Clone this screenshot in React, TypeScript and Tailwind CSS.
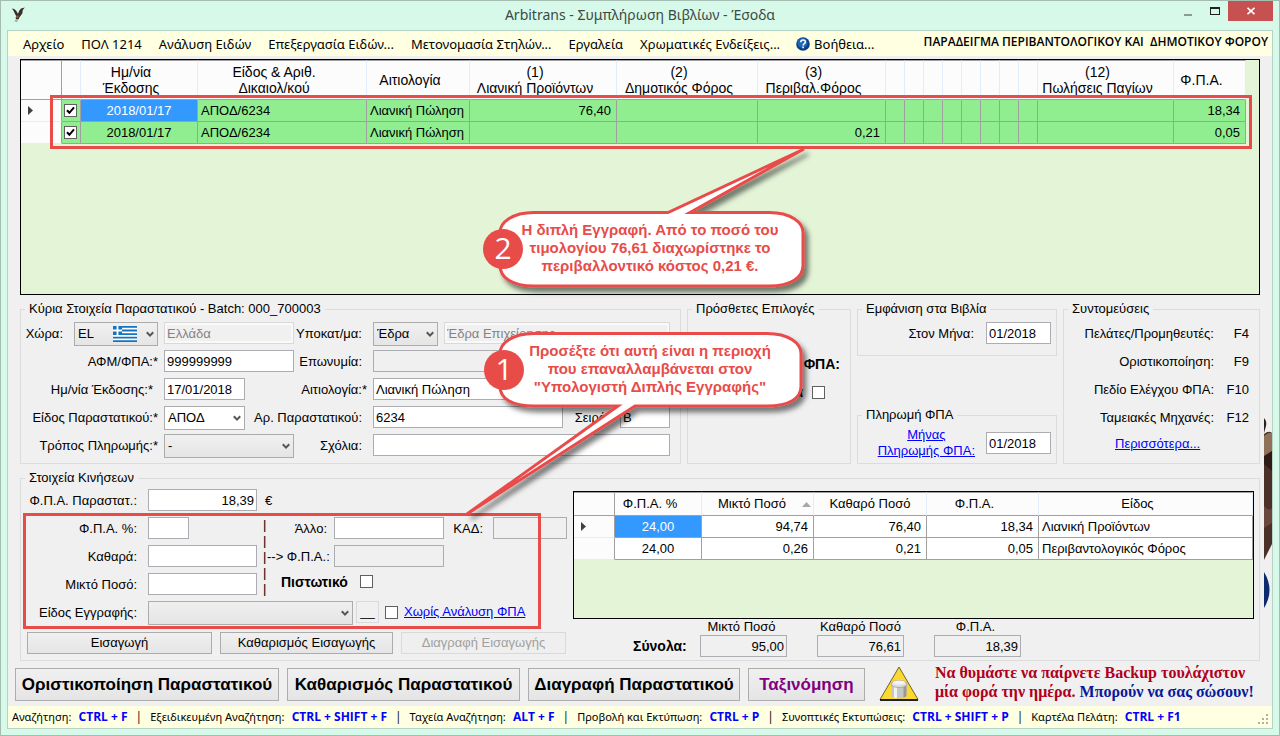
import { useState } from "react";
import type { ReactNode } from "react";
import clsx from "clsx";

const mainCols = [
  { label: "", w: "w-[41px]" },
  { label: "", w: "w-[19px]" },
  { label: "Ημ/νία\nΈκδοσης", w: "w-[117px]" },
  { label: "Είδος & Αριθ.\nΔικαιολ/κού", w: "w-[169px]" },
  { label: "Αιτιολογία", w: "w-[103px]" },
  { label: "(1)\nΛιανική Προϊόντων", w: "w-[147px]" },
  { label: "(2)\nΔημοτικός Φόρος", w: "w-[141px]" },
  { label: "(3)\nΠεριβαλ.Φόρος", w: "w-[128px]" },
  ...Array.from({ length: 8 }, () => ({ label: "", w: "w-[19px]" })),
  { label: "(12)\nΠωλήσεις Παγίων", w: "w-[136px]" },
  { label: "Φ.Π.Α.", w: "w-[72px]" },
];

const mainRows = [
  { date: "2018/01/17", doc: "ΑΠΟΔ/6234", reason: "Λιανική Πώληση", values: ["76,40", "", ""], vat: "18,34" },
  { date: "2018/01/17", doc: "ΑΠΟΔ/6234", reason: "Λιανική Πώληση", values: ["", "", "0,21"], vat: "0,05" },
];

const lines = [
  { pct: "24,00", gross: "94,74", net: "76,40", vat: "18,34", kind: "Λιανική Προϊόντων" },
  { pct: "24,00", gross: "0,26", net: "0,21", vat: "0,05", kind: "Περιβαντολογικός Φόρος" },
];

const shortcuts = [
  ["Πελάτες/Προμηθευτές:", "F4"],
  ["Οριστικοποίηση:", "F9"],
  ["Πεδίο Ελέγχου ΦΠΑ:", "F10"],
  ["Ταμειακές Μηχανές:", "F12"],
];

const statusItems = [
  ["Αναζήτηση:", "CTRL + F"],
  ["Εξειδικευμένη Αναζήτηση:", "CTRL + SHIFT + F"],
  ["Ταχεία Αναζήτηση:", "ALT + F"],
  ["Προβολή και Εκτύπωση:", "CTRL + P"],
  ["Συνοπτικές Εκτυπώσεις:", "CTRL + SHIFT + P"],
  ["Καρτέλα Πελάτη:", "CTRL + F1"],
];

function Group({ title, className, children }: { title: string; className?: string; children: ReactNode }) {
  return (
    <fieldset className={clsx("min-w-0 border border-[#dcdcdc]", className)}>
      <legend className="ml-1 px-1 leading-4 whitespace-nowrap">{title}</legend>
      {children}
    </fieldset>
  );
}

function Field({ id, value = "", className, disabled, faded, label }: {
  id: string; value?: string; className?: string; disabled?: boolean; faded?: boolean; label?: string;
}) {
  return (
    <input id={id} type="text" defaultValue={value} disabled={disabled} aria-label={label}
      className={clsx("h-[22px] min-w-0 border px-[2px] leading-4",
        faded ? "border-[#d9d9d9] bg-[#f0f0f0] text-[#838383] outline-2 -outline-offset-3 outline-white/60"
          : disabled ? "border-[#abadb3] bg-[#f0f0f0] text-black" : "border-[#abadb3] bg-white text-black",
        className)} />
  );
}

function Combo({ id, value, className, white, children }: {
  id: string; value: string; className?: string; white?: boolean; children?: ReactNode;
}) {
  return (
    <div className={clsx("relative h-6", className)}>
      <select id={id} defaultValue={value}
        className={clsx("h-6 w-full appearance-none border border-[#acacac] px-[3px]",
          white ? "bg-white" : "bg-linear-to-b from-[#f0f0f0] to-[#e5e5e5]")}>
        <option>{value}</option>
      </select>
      {children}
      <svg className="pointer-events-none absolute top-[9px] right-1 h-[7px] w-[8px]" viewBox="0 0 8 7" fill="none" aria-hidden="true">
        <path d="M.8 1.2 4 4.6 7.2 1.2" stroke="#555" strokeWidth="2" />
      </svg>
    </div>
  );
}

function CheckBox({ id, label, on }: { id: string; label?: string; on?: boolean }) {
  const [checked, setChecked] = useState(!!on);
  return (
    <span className="relative block size-[13px]">
      <input id={id} type="checkbox" aria-label={label} checked={checked} onChange={() => setChecked(!checked)}
        className="block size-[13px] appearance-none border border-[#606060] bg-white" />
      {checked && (
        <svg className="pointer-events-none absolute inset-0 size-[13px]" viewBox="0 0 13 13" fill="none" aria-hidden="true">
          <path d="M3 6.2 5.4 8.8 10 3.4" stroke="#000" strokeWidth="2" />
        </svg>
      )}
    </span>
  );
}

function Label({ htmlFor, className, children }: { htmlFor: string; className?: string; children: ReactNode }) {
  return (
    <label htmlFor={htmlFor} className={clsx("shrink-0 text-right leading-6 whitespace-nowrap", className)}>{children}</label>
  );
}

function RowArrow() {
  return (
    <svg className="ml-[7px] h-[9px] w-[6px]" viewBox="0 0 6 9" aria-hidden="true">
      <path d="M0 0 5 4.500 0 9Z" fill="#404040" />
    </svg>
  );
}

function TitleBar() {
  return (
    <header className="relative flex h-[29px] shrink-0 items-start justify-center">
      <svg className="absolute top-[6px] left-[11px] h-[16px] w-[13px]" viewBox="0 0 13 16" aria-hidden="true">
        <path d="M0 1.5 2.2 2l2 1.8 1.8 3 1.2-3L9 1.5 12.8.5 10.8 3l-.5 3.5-3 4-.7 1.8-2 .2-1.2-1.8 1.2-.9L3 7 1.8 4.2Z" fill="#3b2f2b" />
        <path d="m3.8 12 2.2.3-.8 3-2.8-.9Z" fill="#9ab3bd" />
        <path d="m5 8 2 1-1 2-2-.6Z" fill="#8a5a32" />
      </svg>
      <h1 className="font-[Noto_Sans,sans-serif] text-[14px] leading-7 text-[#3c4a44]">Arbitrans - Συμπλήρωση Βιβλίων - Έσοδα</h1>
      <div className="absolute top-0 right-[6px] flex h-5 items-stretch">
        <button aria-label="Ελαχιστοποίηση" className="flex w-[27px] items-end justify-center pb-[5px]">
          <span className="block h-[2px] w-2 bg-[#8b9c94]" />
        </button>
        <button aria-label="Μεγιστοποίηση" className="flex w-[27px] items-center justify-center">
          <span className="block h-2 w-[10px] border border-t-2 border-[#222]" />
        </button>
        <button aria-label="Κλείσιμο" className="flex w-[45px] items-center justify-center bg-[#c75050]">
          <svg className="size-2" viewBox="0 0 8 8" aria-hidden="true">
            <path d="m.5.8 7 6.4m0-6.4-7 6.4" stroke="#fff" strokeWidth="1.7" />
          </svg>
        </button>
      </div>
    </header>
  );
}

function MenuBar() {
  return (
    <nav className="flex h-[25px] shrink-0 items-center gap-[17px] bg-[#ffffe1] pr-1 pl-[15px] font-[Noto_Sans,sans-serif] text-[13px] whitespace-nowrap">
      <button>Αρχείο</button>
      <button>ΠΟΛ 1214</button>
      <button>Ανάλυση Ειδών</button>
      <button>Επεξεργασία Ειδών...</button>
      <button>Μετονομασία Στηλών...</button>
      <button>Εργαλεία</button>
      <button>Χρωματικές Ενδείξεις...</button>
      <button className="-ml-px flex items-center gap-1">
        <svg className="size-[14px]" viewBox="0 0 14 14" aria-hidden="true">
          <circle cx="7" cy="7" r="6.8" fill="#0a3f86" />
          <circle cx="6.5" cy="6" r="5" fill="#1d66b8" />
          <path d="M4.800 5.200c0-3 4.600-2.900 4.600-.2 0 1.700-2.300 1.700-2.300 3.500M7.100 9.600v1.700" fill="none" stroke="#fff" strokeWidth="1.600" />
        </svg>
        Βοήθεια...
      </button>
      <strong className="ml-auto pb-1 font-[Open_Sans,sans-serif] text-[12px] font-semibold whitespace-pre">ΠΑΡΑΔΕΙΓΜΑ ΠΕΡΙΒΑΝΤΟΛΟΓΙΚΟΥ ΚΑΙ  ΔΗΜΟΤΙΚΟΥ ΦΟΡΟΥ</strong>
    </nav>
  );
}

function MainGrid() {
  const cell = "h-[22px] border-r border-b border-[#a0a0a0] p-0 px-[3px] leading-4";
  return (
    <div className="h-[236px] border border-black bg-[#e4f4d7]">
      <table className="w-[1225px] table-fixed border-separate border-spacing-0 whitespace-nowrap">
        <thead className="text-[14px]">
          <tr>
            {mainCols.map((c, i) => (
              <th key={i} className={clsx(c.w, "h-10 border-t border-r border-b border-t-[#a0a0a0] border-b-[#a0a0a0] bg-[#fcfcfc] p-0 text-center leading-4 font-normal whitespace-pre",
                i === 0 ? "border-r-[#a0a0a0]" : "border-r-[#e2edfb]", c.label && "pr-4")}>{c.label}</th>
            ))}
          </tr>
        </thead>
        <tbody>
          {mainRows.map((r, i) => (
            <tr key={i} className="bg-[#90ee90]">
              <td className="h-[22px] border-r border-b border-r-[#a0a0a0] border-b-[#e2edfb] bg-[#fcfcfc] p-0">{i === 0 && <RowArrow />}</td>
              <td className="h-[22px] border-r border-b border-[#a0a0a0] p-0 pl-[2px]"><CheckBox id={`row${i}`} label="Επιλογή γραμμής" on /></td>
              <td className={clsx(cell, "text-center", i === 0 && "bg-[#3399ff] text-white")}>{r.date}</td>
              <td className={cell}>{r.doc}</td>
              <td className={cell}>{r.reason}</td>
              {r.values.map((v, j) => <td key={j} className={clsx(cell, "pr-[5px] text-right")}>{v}</td>)}
              {Array.from({ length: 9 }, (_, j) => <td key={j} className={cell} />)}
              <td className={clsx(cell, "pr-[5px] text-right")}>{r.vat}</td>
            </tr>
          ))}
        </tbody>
      </table>
    </div>
  );
}

function DocumentGroup() {
  return (
    <Group title="Κύρια Στοιχεία Παραστατικού - Batch: 000_700003" className="flex-1">
      <div className="flex flex-col gap-1 pt-[5px] pr-[10px] pb-[5px] *:flex *:h-6 *:items-start">
        <div>
          <Label htmlFor="country" className="w-[53px] pr-[11px]">Χώρα:</Label>
          <Combo id="country" value="EL" className="mr-[6px] w-[84px]">
            <svg className="pointer-events-none absolute top-1 left-[39px] h-4 w-6" viewBox="0 0 24 16" aria-label="Ελλάδα">
              <path fill="#fff" d="M0 0h24v16H0z" />
              <path fill="#1673bd" d="M0 0h24v1.800H0zM0 3.600h24v1.800H0zM0 7.200h24V9H0zM0 10.700h24v1.800H0zM0 14.200h24V16H0zM0 0h9v9H0z" />
              <path stroke="#fff" strokeWidth="1.800" d="M4.500 0v9M0 4.500h9" />
            </svg>
          </Combo>
          <Field id="countryName" value="Ελλάδα" label="Όνομα χώρας" disabled faded className="w-[130px]" />
          <Label htmlFor="branch" className="w-[73px] pr-[5px]">Υποκατ/μα:</Label>
          <Combo id="branch" value="Έδρα" className="mx-[6px] w-[65px]" />
          <Field id="branchName" value="Έδρα Επιχείρησης" label="Όνομα υποκαταστήματος" disabled faded className="flex-1" />
        </div>
        <div>
          <Label htmlFor="afm" className="mr-[6px] w-[137px]">ΑΦΜ/ΦΠΑ:*</Label>
          <Field id="afm" value="999999999" className="w-[130px]" />
          <Label htmlFor="name" className="mr-[6px] w-[73px] pr-[5px]">Επωνυμία:</Label>
          <Field id="name" disabled className="flex-1" />
        </div>
        <div>
          <Label htmlFor="issued" className="mr-[6px] w-[137px] pr-[5px]">Ημ/νία Έκδοσης:*</Label>
          <Field id="issued" value="17/01/2018" className="w-[81px]" />
          <Label htmlFor="reason" className="mr-[6px] w-[122px]">Αιτιολογία:*</Label>
          <Field id="reason" value="Λιανική Πώληση" className="flex-1" />
        </div>
        <div>
          <Label htmlFor="docType" className="mr-[6px] w-[137px]">Είδος Παραστατικού:*</Label>
          <Combo id="docType" value="ΑΠΟΔ" white className="w-[81px]" />
          <Label htmlFor="docNo" className="mr-[6px] w-[122px] pr-[5px]">Αρ. Παραστατικού:</Label>
          <Field id="docNo" value="6234" className="flex-1" />
          <Label htmlFor="series" className="w-[57px] pr-[10px]">Σειρά:</Label>
          <Field id="series" value="Β" className="w-[50px]" />
        </div>
        <div>
          <Label htmlFor="payment" className="mr-[6px] w-[137px]">Τρόπος Πληρωμής:*</Label>
          <Combo id="payment" value="-" className="w-[130px]" />
          <Label htmlFor="notes" className="mr-[6px] w-[73px] pr-[5px]">Σχόλια:</Label>
          <Field id="notes" className="flex-1" />
        </div>
      </div>
    </Group>
  );
}

function EntryForm() {
  const button = "h-[22px] border border-[#acacac] bg-linear-to-b from-[#f0f0f0] to-[#e5e5e5] disabled:border-[#d9d9d9] disabled:from-[#efefef] disabled:to-[#efefef] disabled:text-[#a0a0a0]";
  return (
    <div className="w-[547px] shrink-0">
      <div className="flex h-7 items-start">
        <Label htmlFor="vatDoc" className="mr-[11px] w-[116px]">Φ.Π.Α. Παραστατ.:</Label>
        <Field id="vatDoc" value="18,39" className="w-[109px] text-right" />
        <span className="pl-2 leading-6">€</span>
      </div>
      <div className="flex h-[84px]">
        <div className="flex flex-col *:flex *:h-7 *:items-start">
          <div>
            <Label htmlFor="vatPct" className="mr-[11px] w-[116px]">Φ.Π.Α. %:</Label>
            <Field id="vatPct" className="w-[41px]" />
          </div>
          <div>
            <Label htmlFor="net" className="mr-[11px] w-[116px]">Καθαρά:</Label>
            <Field id="net" className="w-[109px]" />
          </div>
          <div>
            <Label htmlFor="gross" className="mr-[11px] w-[116px]">Μικτό Ποσό:</Label>
            <Field id="gross" className="w-[109px]" />
          </div>
        </div>
        <div className="w-[10px] pl-[6px] leading-4">
          {[0, 1, 2, 3, 4].map((n) => <div key={n}>|</div>)}
        </div>
        <div className="flex flex-1 flex-col *:flex *:h-7 *:items-start">
          <div>
            <Label htmlFor="other" className="mr-[7px] w-[60px]">Άλλο:</Label>
            <Field id="other" className="w-[110px]" />
            <Label htmlFor="kad" className="w-[49px] pr-[10px]">ΚΑΔ:</Label>
            <Field id="kad" disabled className="w-[74px]" />
          </div>
          <div>
            <Label htmlFor="vatAmount" className="mr-[7px] w-[60px]">--&gt; Φ.Π.Α.:</Label>
            <Field id="vatAmount" disabled className="w-[110px]" />
          </div>
          <div className="gap-[9px] pt-[2px] pl-[14px]">
            <label htmlFor="credit" className="w-[70px] text-[14px] leading-[14px] font-bold">Πιστωτικό</label>
            <CheckBox id="credit" />
          </div>
        </div>
      </div>
      <div className="flex h-[31px] items-start">
        <Label htmlFor="entryKind" className="mr-[11px] w-[116px]">Είδος Εγγραφής:</Label>
        <Combo id="entryKind" value="" className="w-[205px]" />
        <button className="mx-[3px] h-[22px] w-[23px] border border-[#d9d9d9] leading-4">__</button>
        <div className="flex h-[22px] items-center gap-[6px] pl-[3px]">
          <CheckBox id="noVat" label="Χωρίς Ανάλυση ΦΠΑ" />
          <a href="#no-vat" className="whitespace-nowrap text-[#0000ff] underline">Χωρίς Ανάλυση ΦΠΑ</a>
        </div>
      </div>
      <div className="flex gap-2 pl-[6px]">
        <button className={clsx(button, "w-[185px]")}>Εισαγωγή</button>
        <button className={clsx(button, "w-[173px]")}>Καθαρισμός Εισαγωγής</button>
        <button disabled className={clsx(button, "w-[165px]")}>Διαγραφή Εισαγωγής</button>
      </div>
    </div>
  );
}

function LinesPanel() {
  const head = "h-6 border-t border-r border-b border-t-[#a0a0a0] border-b-[#a0a0a0] bg-[#fcfcfc] p-0 font-normal leading-4";
  const cell = "h-[22px] border-r border-b border-[#a0a0a0] bg-white p-0 px-[3px] leading-4";
  return (
    <div className="ml-[5px] min-w-0 flex-1 pt-[2px]">
      <div className="h-[128px] border border-black bg-[#e4f4d7]">
        <table className="w-full table-fixed border-separate border-spacing-0 whitespace-nowrap">
          <thead>
            <tr>
              <th className={clsx(head, "w-[41px] border-r-[#a0a0a0]")} />
              <th className={clsx(head, "w-[87px] border-r-[#e2edfb] pr-4 text-center")}>Φ.Π.Α. %</th>
              <th className={clsx(head, "w-[112px] border-r-[#e2edfb] pr-[2px] text-right")}>
                <span className="inline-flex items-center gap-4">
                  Μικτό Ποσό
                  <svg className="h-[5px] w-[9px]" viewBox="0 0 9 5" aria-hidden="true"><path d="M4.500 0 9 5H0Z" fill="#a8a8a8" /></svg>
                </span>
              </th>
              <th className={clsx(head, "w-[113px] border-r-[#e2edfb] text-center")}>Καθαρό Ποσό</th>
              <th className={clsx(head, "w-[112px] border-r-[#e2edfb] pr-4 text-center")}>Φ.Π.Α.</th>
              <th className={clsx(head, "border-r-[#e2edfb] pr-4 text-center")}>Είδος</th>
            </tr>
          </thead>
          <tbody>
            {lines.map((l, i) => (
              <tr key={i}>
                <td className="h-[22px] border-r border-b border-r-[#a0a0a0] border-b-[#e2edfb] bg-[#fcfcfc] p-0">{i === 0 && <RowArrow />}</td>
                <td className={clsx("h-[22px] border-r border-b border-[#a0a0a0] p-0 text-center leading-4", i === 0 ? "bg-[#3399ff] text-white" : "bg-white")}>{l.pct}</td>
                <td className={clsx(cell, "pr-[5px] text-right")}>{l.gross}</td>
                <td className={clsx(cell, "pr-[5px] text-right")}>{l.net}</td>
                <td className={clsx(cell, "pr-[5px] text-right")}>{l.vat}</td>
                <td className={cell}>{l.kind}</td>
              </tr>
            ))}
          </tbody>
        </table>
      </div>
      <div className="flex items-end gap-[30px] pl-[60px] *:flex *:flex-col">
        <strong className="-mr-5 h-[21px] w-[57px] text-[14px] leading-5">Σύνολα:</strong>
        <div><label htmlFor="sumGross" className="pr-1 text-center leading-4">Μικτό Ποσό</label><Field id="sumGross" value="95,00" disabled className="w-[87px] text-right" /></div>
        <div><label htmlFor="sumNet" className="text-center leading-4">Καθαρό Ποσό</label><Field id="sumNet" value="76,61" disabled className="w-[87px] text-right" /></div>
        <div><label htmlFor="sumVat" className="pr-1 text-center leading-4">Φ.Π.Α.</label><Field id="sumVat" value="18,39" disabled className="w-[87px] text-right" /></div>
      </div>
    </div>
  );
}

function ActionBar() {
  const big = "h-[33px] shrink-0 border border-[#adadad] bg-linear-to-b from-[#f0f0f0] to-[#e5e5e5] text-[17px] font-bold whitespace-nowrap";
  return (
    <div className="mt-[7px] mb-[5px] flex h-[33px] items-center gap-2 pl-[7px]">
      <button className={clsx(big, "w-[264px]")}>Οριστικοποίηση Παραστατικού</button>
      <button className={clsx(big, "w-[233px]")}>Καθαρισμός Παραστατικού</button>
      <button className={clsx(big, "w-[212px]")}>Διαγραφή Παραστατικού</button>
      <button className={clsx(big, "w-[117px] text-[#800080]")}>Ταξινόμηση</button>
      <svg className="ml-[6px] h-[37px] w-[40px] shrink-0" viewBox="0 0 40 37" aria-hidden="true">
        <path d="M20 1 39 33.500H1Z" fill="#fcd930" stroke="#6e6233" />
        <path d="M1 34h38" stroke="#222" strokeWidth="2" />
        <path d="M12.500 17v12.500c0 4 15 4 15 0V17Z" fill="#c6c6c6" />
        <path d="M15 19v13h3V19Z" fill="#f1f1f1" />
        <path d="M24.500 19v13l3-2V18Z" fill="#999" />
        <ellipse cx="20" cy="18" rx="8" ry="3.500" fill="#dedede" stroke="#999" strokeWidth=".7" />
        <ellipse cx="20" cy="16.500" rx="6" ry="2" fill="#f4f4f4" />
      </svg>
      <p className="ml-2 pb-[6px] font-['Liberation_Serif',serif] text-[16px] leading-[19px] font-bold whitespace-nowrap text-[#b00020]">
        Να θυμάστε να παίρνετε Backup τουλάχιστον<br />μία φορά την ημέρα. <span className="text-[#0a1a9c]">Μπορούν να σας σώσουν!</span>
      </p>
    </div>
  );
}

function Annotations() {
  return (
    <div className="pointer-events-none absolute -top-px -left-px h-[736px] w-[1280px]">
      <svg className="absolute inset-0 size-full" viewBox="0 0 1280 736" aria-hidden="true">
        <defs>
          <filter id="shadow" x="-10%" y="-10%" width="130%" height="130%">
            <feDropShadow dx="4" dy="5" stdDeviation="2.500" floodColor="#000" floodOpacity=".5" />
          </filter>
        </defs>
        <g fill="none" stroke="#e84c49" strokeWidth="3">
          <path d="M51.500 96.500h1199v51H51.500z" />
          <path d="M24.500 514.500h515v113H24.500z" />
        </g>
        <g fill="#fff" stroke="#e84c49" strokeWidth="3" filter="url(#shadow)">
          <path d="M534 212.500H668L804 149 690 212.500h79c22 0 34 10 34 20v33c0 12-12 20.500-34 20.500H534c-22 0-34-8.500-34-20.500v-33c0-10 12-20 34-20Z" />
          <path d="M534 333.500h233c22 0 34 10 34 20v33c0 12-12 19.500-34 19.500H635L467 514 618 406h-84c-22 0-34-7.500-34-19.500v-33c0-10 12-20 34-20Z" />
        </g>
        <circle cx="503" cy="249" r="20" fill="#e84c49" />
        <circle cx="504" cy="370" r="20" fill="#e84c49" />
      </svg>
      <span className="absolute top-[228px] left-[483px] w-10 text-center font-[Open_Sans,sans-serif] text-[30px] leading-10 text-white">2</span>
      <span className="absolute top-[349px] left-[484px] w-10 text-center font-[Open_Sans,sans-serif] text-[30px] leading-10 text-white">1</span>
      <p className="absolute top-[221px] left-[510px] w-[280px] text-center text-[15px] leading-[18px] font-bold whitespace-nowrap text-[#e84c49]">
        Η διπλή Εγγραφή. Από το ποσό του<br />τιμολογίου 76,61 διαχωρίστηκε το<br />περιβαλλοντικό κόστος 0,21 €.
      </p>
      <p className="absolute top-[342px] left-[510px] w-[280px] text-center text-[15px] leading-[18px] font-bold whitespace-nowrap text-[#e84c49]">
        Προσέξτε ότι αυτή είναι η περιοχή<br />που επαναλλαμβάνεται στον<br />"Υπολογιστή Διπλής Εγγραφής"
      </p>
    </div>
  );
}

export default function App() {
  return (
    <div className="relative border border-[#a3bdb1] bg-[#d7f9e9] font-['Liberation_Sans',Arial,sans-serif] text-[13px] leading-4 text-black">
      <TitleBar />
      <div className="relative mx-[6px] mb-[6px] border border-[#b4d3c5] bg-[#f0f0f0]">
        {/* sliver of the backdrop photo past the panels */}
        <svg className="absolute top-[385px] right-0 h-[195px] w-2" viewBox="0 0 8 195" aria-hidden="true">
          <path d="M0 2q3 3 2 8l-2 7Z" fill="#2b211e" />
          <path d="M0 18q5-4 8-1v111L0 144Z" fill="#4b3028" />
          <path d="M0 20q5-4 8-3v18L0 43Z" fill="#8f7259" />
          <path d="m0 40 8-5v20L0 48Z" fill="#2d1b17" />
          <path d="M0 90q5 6 8 2v15L0 112Z" fill="#6a4840" />
          <path d="M0 156q11 18 0 36Z" fill="#0c2b6d" />
        </svg>
        <MenuBar />
        <main className="px-3 pt-[3px]">
          <MainGrid />
          <div className="mt-[6px] flex gap-[6px]">
            <DocumentGroup />
            <Group title="Πρόσθετες Επιλογές" className="w-[164px]">
              <div className="flex flex-col items-end gap-[14px] pt-[39px] pr-[10px] text-[14px] font-bold">
                <span>ΦΠΑ:</span>
                <div className="flex items-center gap-[9px] pr-[15px]">
                  <label htmlFor="extra" className="leading-[13px]">α</label>
                  <CheckBox id="extra" />
                </div>
              </div>
            </Group>
            <div className="flex w-[200px] flex-col justify-between">
              <Group title="Εμφάνιση στα Βιβλία">
                <div className="flex justify-end pt-[5px] pr-[5px] pb-[9px]">
                  <Label htmlFor="month" className="pr-3">Στον Μήνα:</Label>
                  <Field id="month" value="01/2018" className="w-[65px]" />
                </div>
              </Group>
              <Group title="Πληρωμή ΦΠΑ">
                <div className="flex items-center justify-end py-1 pr-[5px]">
                  <a href="#vat-month" className="pr-[11px] text-center text-[#0000ff] underline">Μήνας<br />Πληρωμής ΦΠΑ:</a>
                  <Field id="vatMonth" value="01/2018" label="Μήνας Πληρωμής ΦΠΑ" className="w-[65px]" />
                </div>
              </Group>
            </div>
            <Group title="Συντομεύσεις" className="w-[197px]">
              <dl className="flex flex-col gap-1 pt-[5px] pr-[10px]">
                {shortcuts.map(([k, v]) => (
                  <div key={v} className="flex h-6 justify-end leading-6 whitespace-nowrap">
                    <dt>{k}</dt>
                    <dd className="w-[35px] text-right">{v}</dd>
                  </div>
                ))}
              </dl>
              <a href="#more" className="mt-[6px] ml-[51px] block text-[#0000ff] underline">Περισσότερα...</a>
            </Group>
          </div>
          <div className="mt-[6px]">
            <Group title="Στοιχεία Κινήσεων">
              <div className="flex pt-[3px] pr-[5px] pb-[3px]">
                <EntryForm />
                <LinesPanel />
              </div>
            </Group>
          </div>
        </main>
        <ActionBar />
        <footer className="flex h-[22px] items-center bg-[#ffffe1] pl-1 font-[Open_Sans,Noto_Sans,sans-serif] text-[12px] whitespace-nowrap">
          {statusItems.map(([k, v], i) => (
            <span key={k}>
              {i > 0 && <span className="px-2">|</span>}
              <span className="font-[Noto_Sans,sans-serif] text-[11px]">{k}</span> <strong className="pl-1 text-[#0000ff]">{v}</strong>
            </span>
          ))}
          <svg className="mt-1 mr-[3px] ml-auto size-[11px]" viewBox="0 0 11 11" aria-hidden="true">
            <path d="M8 0h2v2H8zM4 4h2v2H4zM8 4h2v2H8zM0 8h2v2H0zM4 8h2v2H4zM8 8h2v2H8z" fill="#b0b0a8" />
          </svg>
        </footer>
      </div>
      <Annotations />
    </div>
  );
}
